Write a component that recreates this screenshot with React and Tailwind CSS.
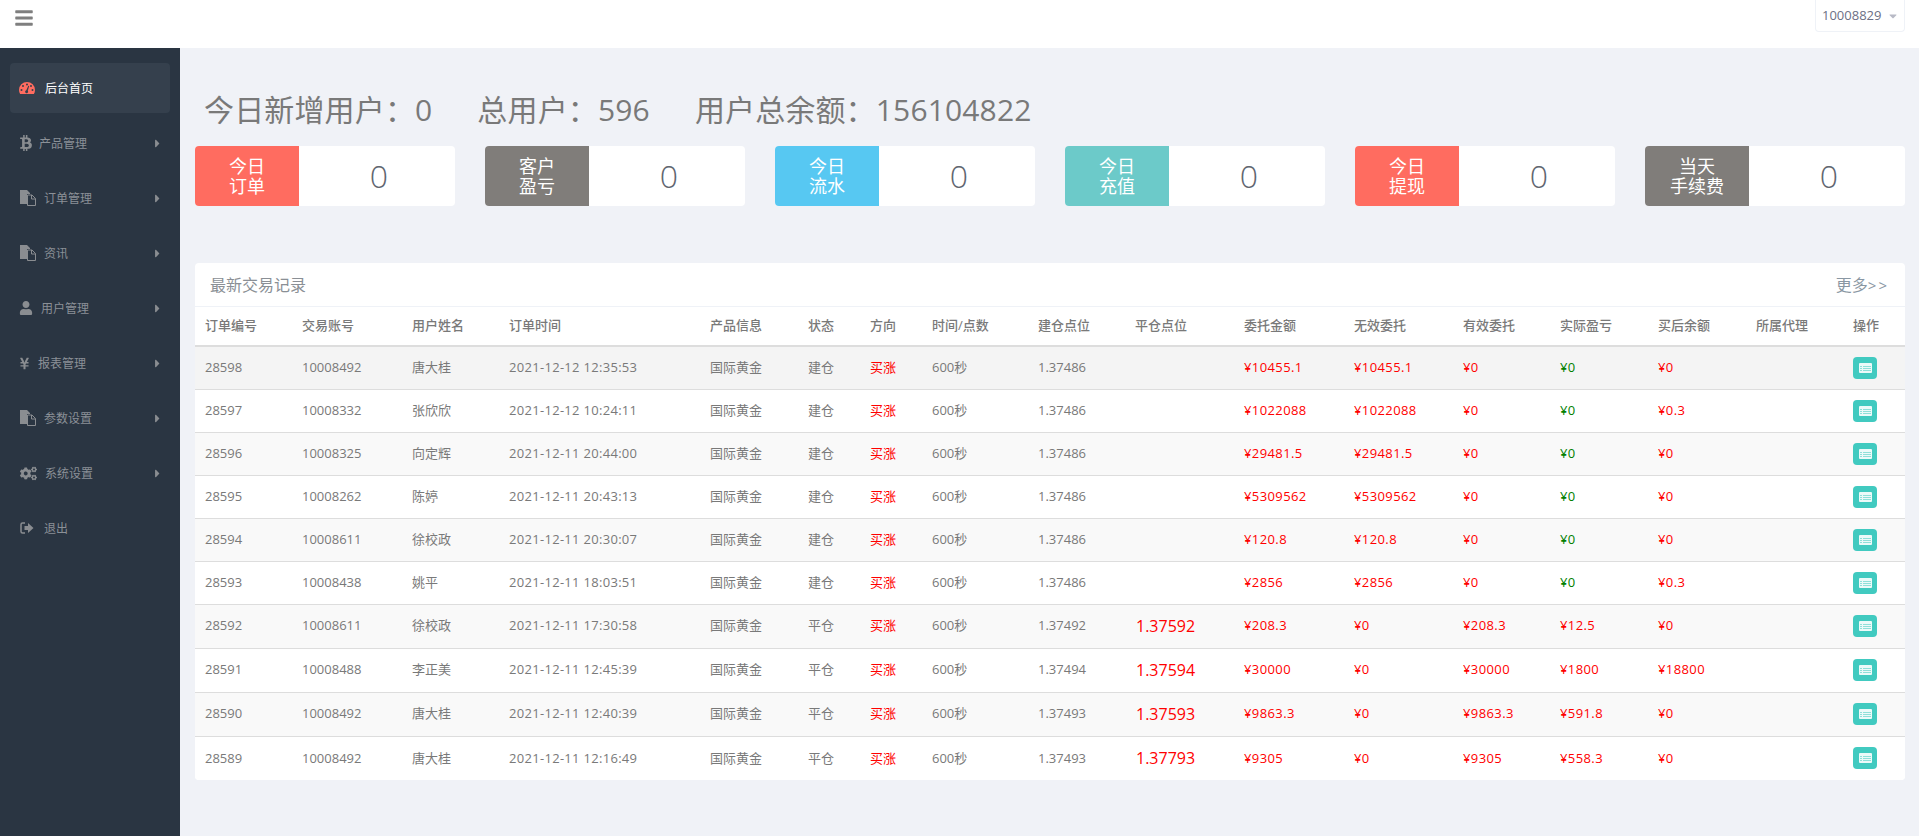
import React from 'react';
import { FaBars, FaBtc, FaCaretRight, FaCaretDown, FaCogs, FaUser, FaYenSign } from 'react-icons/fa';

// dashboard gauge
const GaugeIcon = () => (
  <svg viewBox="0 0 16 12" className="w-[16px] h-[12px] fill-[#ff6c60]">
    <path fillRule="evenodd" d="M8 0a8 8 0 0 1 8 8c0 1.500-.4 2.900-1.100 4H1.100A7.900 7.900 0 0 1 0 8a8 8 0 0 1 8-8zM8 1.500a1 1 0 1 0 0 2 1 1 0 0 0 0-2zM4 3.100a1 1 0 1 0 0 2 1 1 0 0 0 0-2zM12 3.100a1 1 0 1 0 0 2 1 1 0 0 0 0-2zM2.500 7a1 1 0 1 0 0 2 1 1 0 0 0 0-2zM13.500 7a1 1 0 1 0 0 2 1 1 0 0 0 0-2zM9.300 3.800 7.300 8.300a1.500 1.500 0 1 0 1.500.5l1.400-4.700z" />
  </svg>
);

// fa-files-o
const FilesIcon = () => (
  <svg viewBox="0 0 16 16" className="w-[16px] h-[16px]">
    <path d="M0 0h7l3 3v1H7v10H0z" fill="#8a8d91" />
    <path d="M7.500 5h4.500l3.500 3.500v7h-8z" fill="none" stroke="#8a8d91" strokeWidth="1" />
    <path d="M11.500 5v4h4" fill="none" stroke="#8a8d91" strokeWidth="1" />
  </svg>
);

// fa-sign-out
const LogoutIcon = () => (
  <svg viewBox="0 0 14 12" className="w-[14px] h-[12px]">
    <path d="M5 1H2.500A1.500 1.500 0 0 0 1 2.500v7A1.500 1.500 0 0 0 2.500 11H5" fill="none" stroke="#8a8d91" strokeWidth="1.500" />
    <path d="M8 1l5.500 5L8 11V8H4.500V4H8z" fill="#8a8d91" />
  </svg>
);

// fa-list-alt as it looks on the small teal button
const ListIcon = () => (
  <svg viewBox="0 0 13 10" className="w-[13px] h-[10px]">
    <rect x="0" y="0" width="13" height="10" rx="1" fill="#ffffff" fillOpacity="0.9" />
    <path d="M1 3h2v1H1zM4 3h8v1H4zM1 5h2v1H1zM4 5h8v1H4zM1 7h2v1H1zM4 7h8v1H4z" fill="#8fe0d9" />
  </svg>
);

const menu = [
  { label: '产品管理', icon: <FaBtc className="text-[16px] -ml-[2px]" />, box: 'w-[19px]' },
  { label: '订单管理', icon: <FilesIcon />, box: 'w-[24px]' },
  { label: '资讯', icon: <FilesIcon />, box: 'w-[24px]' },
  { label: '用户管理', icon: <FaUser className="text-[14px] -ml-[1px]" />, box: 'w-[21px]' },
  { label: '报表管理', icon: <FaYenSign className="text-[13px] -ml-[2px]" />, box: 'w-[18px]' },
  { label: '参数设置', icon: <FilesIcon />, box: 'w-[24px]' },
  { label: '系统设置', icon: <FaCogs className="text-[17px]" />, box: 'w-[25px]' },
  { label: '退出', icon: <LogoutIcon />, box: 'w-[24px]', noArrow: true },
];

const stats = [
  { top: '今日', bottom: '订单', color: 'bg-[#ff6c60]' },
  { top: '客户', bottom: '盈亏', color: 'bg-[#807d7a]' },
  { top: '今日', bottom: '流水', color: 'bg-[#57c8f2]' },
  { top: '今日', bottom: '充值', color: 'bg-[#6ccac9]' },
  { top: '今日', bottom: '提现', color: 'bg-[#ff6c60]' },
  { top: '当天', bottom: '手续费', color: 'bg-[#807d7a]' },
];

const columns = ['订单编号', '交易账号', '用户姓名', '订单时间', '产品信息', '状态', '方向', '时间/点数', '建仓点位', '平仓点位', '委托金额', '无效委托', '有效委托', '实际盈亏', '买后余额', '所属代理', '操作'];

const rows = [
  ['28598', '10008492', '唐大桂', '2021-12-12 12:35:53', '建仓', '1.37486', '', '10455.1', '10455.1', '0', '0', '0'],
  ['28597', '10008332', '张欣欣', '2021-12-12 10:24:11', '建仓', '1.37486', '', '1022088', '1022088', '0', '0', '0.3'],
  ['28596', '10008325', '向定辉', '2021-12-11 20:44:00', '建仓', '1.37486', '', '29481.5', '29481.5', '0', '0', '0'],
  ['28595', '10008262', '陈婷', '2021-12-11 20:43:13', '建仓', '1.37486', '', '5309562', '5309562', '0', '0', '0'],
  ['28594', '10008611', '徐校政', '2021-12-11 20:30:07', '建仓', '1.37486', '', '120.8', '120.8', '0', '0', '0'],
  ['28593', '10008438', '姚平', '2021-12-11 18:03:51', '建仓', '1.37486', '', '2856', '2856', '0', '0', '0.3'],
  ['28592', '10008611', '徐校政', '2021-12-11 17:30:58', '平仓', '1.37492', '1.37592', '208.3', '0', '208.3', '12.5', '0'],
  ['28591', '10008488', '李正美', '2021-12-11 12:45:39', '平仓', '1.37494', '1.37594', '30000', '0', '30000', '1800', '18800'],
  ['28590', '10008492', '唐大桂', '2021-12-11 12:40:39', '平仓', '1.37493', '1.37593', '9863.3', '0', '9863.3', '591.8', '0'],
  ['28589', '10008492', '唐大桂', '2021-12-11 12:16:49', '平仓', '1.37493', '1.37793', '9305', '0', '9305', '558.3', '0'],
];

const rowBg = (i) => {
  if (i === 0) return 'bg-[#f4f4f4] h-[43px]';
  const h = i > 5 ? 'h-[44px]' : 'h-[43px]';
  return i % 2 === 0 ? `bg-[#f9f9f9] ${h}` : `bg-white ${h}`;
};

const App = () => {
  return (
    <div className="min-h-[836px] bg-[#f0f2f7] font-['Open_Sans','Noto_Sans_CJK_SC',sans-serif] text-[#797979]">
      {/* top bar */}
      <header className="h-[48px] bg-white flex justify-between pl-[14px] pr-[14px]">
        <FaBars className="text-[#7f7f7f] text-[20px] mt-[8px]" />
        <div className="w-[90px] h-[32px] bg-white border border-t-0 border-[#eff2f7] rounded-b-[4px] flex items-center pl-[6px] gap-[6px] text-[13px] text-[#6c7085]">
          <span>10008829</span>
          <FaCaretDown className="text-[#b8bac6] text-[12px]" />
        </div>
      </header>

      <div className="flex">
        {/* sidebar */}
        <aside className="w-[180px] min-h-[788px] bg-[#2a3542] pt-[15px] shrink-0">
          <div className="mx-[10px] mb-[5px] h-[50px] rounded-[4px] bg-[#35404d] flex items-center pl-[9px] text-[12px] text-white">
            <span className="w-[26px]"><GaugeIcon /></span>
            <span className="pt-[2px]">后台首页</span>
          </div>
          {menu.map((item) => (
            <div key={item.label} className="mx-[10px] mb-[5px] h-[50px] flex items-center pl-[10px] pr-[6px] text-[12px] text-[#8b9097]">
              <span className={`${item.box} flex items-center text-[#8a8d91]`}>{item.icon}</span>
              <span className="pt-[2px]">{item.label}</span>
              {!item.noArrow && <FaCaretRight className="ml-auto text-[#8a8d91] text-[13px]" />}
            </div>
          ))}
        </aside>

        {/* main */}
        <main className="flex-1 pl-[15px] pr-[14px]">
          <h1 className="h-[98px] pt-[40px] pl-[9px] text-[30px] leading-[44px] font-normal flex gap-[45px] tracking-[0.15px]">
            <span>今日新增用户：0</span>
            <span>总用户：596</span>
            <span>用户总余额：156104822</span>
          </h1>

          <div className="grid grid-cols-6 gap-[30px]">
            {stats.map((s, i) => (
              <div key={i} className="h-[60px] bg-white rounded-[4px] flex overflow-hidden">
                <div className={`w-[104px] ${s.color} flex items-center justify-center text-center text-white text-[18px] leading-[20px]`}>
                  <p>{s.top}<br />{s.bottom}</p>
                </div>
                <div className="flex-1 pl-[4px] flex items-center justify-center text-[32px] font-light text-[#5f6670]">0</div>
              </div>
            ))}
          </div>

          {/* latest trades */}
          <section className="mt-[57px] bg-white rounded-[4px] overflow-hidden">
            <div className="h-[44px] flex items-center justify-between pl-[15px] pr-[16px] border-b border-[#eff2f7]">
              <span className="text-[16px] text-[#8a8f95]">最新交易记录</span>
              <span className="text-[16px] text-[#8a97a3]">更多<span className="text-[15px] tracking-[2px]">&gt;&gt;</span></span>
            </div>
            <table className="w-full table-fixed text-[13px] border-collapse">
              <colgroup>
                <col className="w-[97px]" /><col className="w-[110px]" /><col className="w-[97px]" /><col className="w-[201px]" />
                <col className="w-[98px]" /><col className="w-[62px]" /><col className="w-[62px]" /><col className="w-[106px]" />
                <col className="w-[97px]" /><col className="w-[109px]" /><col className="w-[110px]" /><col className="w-[109px]" />
                <col className="w-[97px]" /><col className="w-[98px]" /><col className="w-[98px]" /><col className="w-[97px]" /><col className="w-[62px]" />
              </colgroup>
              <thead>
                <tr className="h-[39px] border-b-2 border-[#dddddd]">
                  {columns.map((c) => (
                    <th key={c} className="px-[10px] text-left font-medium whitespace-nowrap">{c}</th>
                  ))}
                </tr>
              </thead>
              <tbody>
                {rows.map((r, i) => (
                  <tr key={r[0]} className={`border-b border-[#dddddd] last:border-b-0 ${rowBg(i)}`}>
                    <td className="px-[10px]">{r[0]}</td>
                    <td className="px-[10px]">{r[1]}</td>
                    <td className="px-[10px]">{r[2]}</td>
                    <td className="px-[10px] whitespace-nowrap tracking-[0.3px]">{r[3]}</td>
                    <td className="px-[10px]">国际黄金</td>
                    <td className="px-[10px]">{r[4]}</td>
                    <td className="px-[10px] text-[#ff0000]">买涨</td>
                    <td className="px-[10px]">600秒</td>
                    <td className="px-[10px]">{r[5]}</td>
                    <td className="pl-[11px] pr-[9px] text-[16px] text-[#ff0000]">{r[6]}</td>
                    <td className="px-[10px] text-[#ff0000] tracking-[0.4px]">¥{r[7]}</td>
                    <td className="px-[10px] text-[#ff0000] tracking-[0.4px]">¥{r[8]}</td>
                    <td className="px-[10px] text-[#ff0000] tracking-[0.4px]">¥{r[9]}</td>
                    <td className={`px-[10px] tracking-[0.4px] ${r[6] ? 'text-[#ff0000]' : 'text-[#008000]'}`}>¥{r[10]}</td>
                    <td className="px-[10px] text-[#ff0000] tracking-[0.4px]">¥{r[11]}</td>
                    <td className="px-[10px]"></td>
                    <td className="px-[10px]">
                      <button className="w-[24px] h-[22px] bg-[#41cac0] rounded-[4px] flex items-center justify-center">
                        <ListIcon />
                      </button>
                    </td>
                  </tr>
                ))}
              </tbody>
            </table>
          </section>
        </main>
      </div>
    </div>
  );
};

export default App;
